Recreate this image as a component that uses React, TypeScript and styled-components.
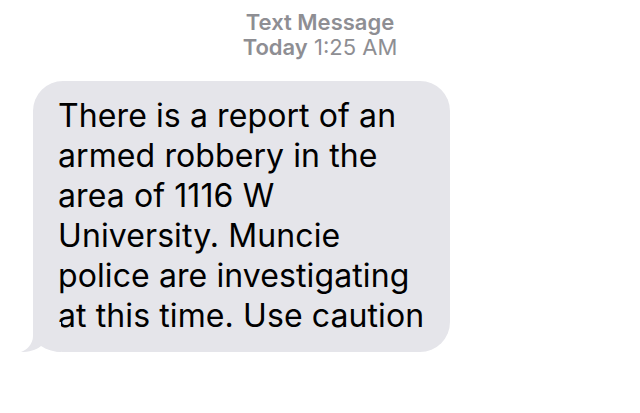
import React from "react";
import styled, { createGlobalStyle } from "styled-components";

const Global = createGlobalStyle`
  html, body { margin: 0; padding: 0; background: #ffffff; }
  body { width: 640px; height: 413px; overflow: hidden; font-family: Inter, "Liberation Sans", Arial, sans-serif; }
`;

const Page = styled.div`
  width: 640px;
  height: 413px;
  display: flex;
  flex-direction: column;
  padding-top: 10px;
  box-sizing: border-box;
`;

const Header = styled.div`
  display: flex;
  flex-direction: column;
  align-items: center;
  color: #8e8e93;
  font-size: 22px;
  line-height: 25px;
`;

const HeaderLine = styled.div<{ $bold?: boolean }>`
  font-weight: ${(p) => (p.$bold ? 600 : 400)};
`;

const Bold = styled.span`
  font-weight: 600;
`;

const Row = styled.div`
  display: flex;
  padding-left: 33px;
  margin-top: 21px;
`;

const Bubble = styled.div`
  position: relative;
  background: #e5e5ea;
  border-radius: 30px;
  width: 417px;
  box-sizing: border-box;
  padding: 15px 0 16px 25px;
  color: #000;
  font-size: 32px;
  line-height: 40px;
  letter-spacing: 0.1px;
`;

const Tail = styled.svg`
  position: absolute;
  left: -12px;
  bottom: 0;
`;

export default function App() {
  return (
    <>
      <Global />
      <Page>
        <Header>
          <HeaderLine $bold>Text Message</HeaderLine>
          <HeaderLine>
            <Bold>Today</Bold> 1:25 AM
          </HeaderLine>
        </Header>
        <Row>
          <Bubble>
            <Tail width="40" height="30" viewBox="0 0 40 30">
              <path d="M12 0 L12 14 C12 22 6 28 0 30 C8 30 15 28 20 24 C26 28 34 30 40 30 L40 0 Z" fill="#e5e5ea" />
            </Tail>
            There is a report of an
            <br />
            armed robbery in the
            <br />
            area of 1116 W
            <br />
            University. Muncie
            <br />
            police are investigating
            <br />
            at this time. Use caution
          </Bubble>
        </Row>
      </Page>
    </>
  );
}
